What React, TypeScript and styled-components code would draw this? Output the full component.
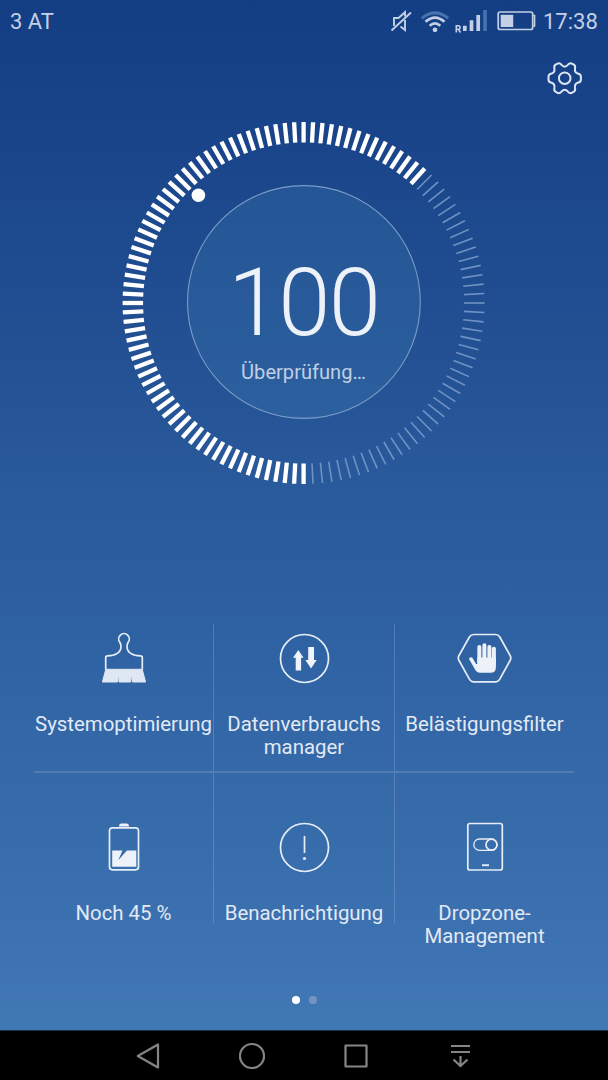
import React from "react";
import styled, { createGlobalStyle } from "styled-components";

const GlobalStyle = createGlobalStyle`
  body { margin: 0; background: #000; }
  * { box-sizing: border-box; }
`;

const Screen = styled.main`
  width: 608px;
  height: 1080px;
  display: flex;
  flex-direction: column;
  overflow: hidden;
  font-family: Roboto, sans-serif;
  color: #e2e9f4;
`;

const Content = styled.div`
  height: 1030px;
  display: flex;
  flex-direction: column;
  background: linear-gradient(
    180deg,
    #133e83 0px,
    #1a458a 150px,
    #225093 340px,
    #2a5b9c 500px,
    #2f62a3 640px,
    #376cab 830px,
    #3e73b3 960px,
    #4079b3 1030px
  );
`;

const StatusBar = styled.header`
  height: 41px;
  display: flex;
  align-items: center;
  justify-content: space-between;
  padding: 0 10px 0 10px;
  font-size: 22px;
  color: #c3d0e5;
`;

const Carrier = styled.span`
  padding-top: 2px;
`;

const StatusIcons = styled.div`
  display: flex;
  align-items: center;
`;

const Clock = styled.span`
  margin-left: 7px;
  padding-top: 2px;
  width: 55px;
  white-space: nowrap;
`;

const Toolbar = styled.div`
  height: 69px;
  display: flex;
  justify-content: flex-end;
  padding: 17px 23px 0 0;
`;

const Gauge = styled.section`
  width: 386px;
  height: 386px;
  align-self: center;
  display: grid;
  place-items: center;
  margin-right: 1px;
  > * { grid-area: 1 / 1; }
`;

const Reading = styled.div`
  display: flex;
  flex-direction: column;
  align-items: center;
  padding-top: 33px;
`;

const Score = styled.div`
  font-size: 94px;
  line-height: 94px;
  font-weight: 300;
  letter-spacing: -1.800px;
  color: #edf1f8;
`;

const State = styled.div`
  margin-top: 10px;
  font-size: 20.100px;
  line-height: 24px;
  color: #c0cee5;
`;

const Tiles = styled.section`
  width: 540px;
  margin: 128px 0 0 34px;
  display: grid;
  grid-template-columns: 180px 181px 179px;
  grid-template-rows: 149px 151px;
`;

const Tile = styled.div<{ $row: number; $last: boolean }>`
  display: flex;
  flex-direction: column;
  align-items: center;
  padding-top: ${(p) => (p.$row === 0 ? 4 : 44)}px;
  border: 0 solid rgba(190, 195, 225, 0.2);
  border-right-width: ${(p) => (p.$last ? 0 : 1)}px;
  border-right-color: rgba(190, 195, 225, 0.26);
  border-bottom-width: ${(p) => (p.$row === 0 ? 2 : 0)}px;
`;

const TileLabel = styled.div`
  margin-top: 25px;
  flex: none;
  font-size: 20.400px;
  line-height: 23px;
  text-align: center;
  white-space: pre;
`;

const Pager = styled.div`
  margin-top: 72px;
  display: flex;
  justify-content: center;
  gap: 9px;
`;

const Dot = styled.i<{ $active?: boolean }>`
  width: 8px;
  height: 8px;
  border-radius: 50%;
  background: ${(p) => (p.$active ? "#fff" : "#7594c4")};
`;

const NavBar = styled.nav`
  height: 50px;
  flex: none;
  display: flex;
  align-items: center;
  justify-content: center;
  gap: 64px;
  background: #000;
  border-top: 1px solid #16304c;
`;

const Icon = styled.svg<{ $ml?: number }>`
  display: block;
  flex: none;
  fill: none;
  margin-left: ${(p) => p.$ml ?? 0}px;
`;

const TICKS = Array.from({ length: 120 }, (_, i) => i * 3);

const Dial = () => (
  <Icon width="386" height="386" viewBox="-192.6 -193 386 386">
    <circle cx="0.3" cy="-1" r="116.4" fill="rgba(64,128,180,0.25)" stroke="#7b9cc9" strokeWidth="1.1" />
    {TICKS.map((a) => {
      const lit = a >= 180 || a <= 42;
      return (
        <line
          key={a}
          y1="-181"
          y2="-160.5"
          transform={`rotate(${a})`}
          stroke={lit ? "#fff" : "#6f92c4"}
          strokeWidth={lit ? 4.3 : 1.6}
        />
      );
    })}
    <circle cx="-105.2" cy="-107.800" r="6.8" fill="#fff" />
  </Icon>
);

const STROKE = "#e6edf7";

const tiles = [
  {
    label: "Systemoptimierung",
    art: (
      <g stroke={STROKE} strokeWidth="1.7" strokeLinejoin="round">
        <path d="M11.700 41.500V29.600q0-1.700 1.800-1.700c8 0 13.500-3.500 13.500-9.500 0-2-.6-3-1.200-4.200a5.300 5.300 0 1 1 8.400 0c-.6 1.200-1.200 2.200-1.200 4.200 0 6 5.500 9.500 13.500 9.500q1.800 0 1.800 1.700V41.500" />
        <path d="M11.800 41.300h36.400l3.400 12.700H38.400l-1.200-8.500-.6 8.500H25l-.3-8.500-1.300 8.500H8.400z" fill="#dfe7f3" stroke="#dfe7f3" strokeWidth="1" />
      </g>
    ),
  },
  {
    label: "Datenverbrauchs\nmanager",
    art: (
      <g>
        <circle cx="30.5" cy="30.5" r="24" stroke={STROKE} strokeWidth="1.7" />
        <path d="M24.300 22l5.200 7.700h-2.400v12.800h-5.400V29.700H19z" fill="#eff3fa" />
        <path d="M37 40.500l5.700-8.500h-2.700V19h-5.800v13h-2.800z" fill="#eff3fa" />
      </g>
    ),
  },
  {
    label: "Belästigungsfilter",
    art: (
      <g>
        <path d="M19.500 6.500h21.800q2.800 0 4.300 2.500l10.300 18.500q1.400 2.500 0 5L45.600 51.200q-1.500 2.700-4.300 2.700H19.500q-2.800 0-4.300-2.700L4.800 32.500q-1.400-2.500 0-5L15.200 9q1.500-2.500 4.300-2.500z" transform="translate(-.8 0)" stroke={STROKE} strokeWidth="1.7" />
        <path d="M14.600 31.600l6.200 10.700q1.600 2.500 4.400 2.500h10.500q5.500 0 5.500-5.500V29.500H22.600v6.500l-1.200 0-3.300-5.600q-.9-1.500-2.600-.9-1.700.7-.9 2.100z" transform="translate(-.3 0)" fill="#edf2f9" />
        <g stroke="#edf2f9" strokeWidth="4" strokeLinecap="round" transform="translate(-.3 0)">
          <path d="M24.650 19V34M29.700 17.200V34M34.700 19V34M39.200 20.700V36" />
        </g>
      </g>
    ),
  },
  {
    label: "Noch 45 %",
    art: (
      <g transform="translate(-.5 0)">
        <rect x="16" y="10.800" width="29" height="42" rx="3" stroke={STROKE} strokeWidth="1.7" />
        <path d="M25.500 9.500q0-3 2.500-3h5q2.500 0 2.500 3z" fill="#edf2f9" />
        <path d="M18.700 33.500h10.300l-4.300 9.700 8.800-9.700h9.300v16.300H18.700z" fill="#edf2f9" />
      </g>
    ),
  },
  {
    label: "Benachrichtigung",
    art: (
      <g>
        <circle cx="30.500" cy="30.500" r="24" stroke={STROKE} strokeWidth="1.700" />
        <path d="M30.500 19v17" stroke={STROKE} strokeWidth="1.700" />
        <circle cx="30.500" cy="41.500" r="1.600" fill={STROKE} />
      </g>
    ),
  },
  {
    label: "Dropzone-\nManagement",
    art: (
      <g stroke={STROKE} strokeWidth="1.700">
        <rect x="12.800" y="6.500" width="34.500" height="46.500" rx="2" />
        <rect x="18.800" y="22" width="23.200" height="11.300" rx="5.650" strokeWidth="1.300" />
        <circle cx="36.500" cy="27.700" r="5.500" />
        <path d="M27 48.200h7" strokeWidth="1.900" />
      </g>
    ),
  },
];

export default function App() {
  return (
    <Screen>
      <GlobalStyle />
      <Content>
        <StatusBar>
          <Carrier>3 AT</Carrier>
          <StatusIcons>
            <Icon width="22" height="24" viewBox="0 0 22 24" stroke="#c3d0e5" strokeWidth="1.900">
              <path d="M1.500 21.500L21 3.500" />
              <path d="M4 17V9h4.500L15 3.200v4.300M10.500 17.500L15 21V11" />
            </Icon>
            <Icon $ml={8} width="30" height="24" viewBox="0 0 30 24" strokeWidth="2.600">
              <path d="M1.800 9.400q13.200-11 26.400 0" stroke="#4473ae" strokeWidth="3" />
              <path d="M5.500 12.800q9.500-8.500 19 0M9.700 16.700q5.300-4.700 10.600 0" stroke="#c3d0e5" />
              <circle cx="15" cy="20.800" r="2.400" fill="#c3d0e5" />
            </Icon>
            <Icon $ml={5} width="33" height="26" viewBox="0 0 33 26">
              <path d="M1.300 24.500v-6.800h2.200q1.600 0 1.600 1.800T3.500 21.200H1.300M3.300 21.200l2.200 3.300" stroke="#c3d0e5" strokeWidth="1.600" />
              <path d="M9.800 23v-5.300M16.500 23V12.300M23.200 23V7" stroke="#c3d0e5" strokeWidth="3.700" />
              <path d="M30 23V2" stroke="#4473ae" strokeWidth="3.700" />
            </Icon>
            <Icon $ml={9} width="39" height="20" viewBox="0 0 39 20">
              <rect x="1.200" y="1" width="34.500" height="17.500" rx="2" stroke="#c3d0e5" strokeWidth="1.700" />
              <rect x="3.700" y="3.800" width="12.500" height="12.200" fill="#c3d0e5" />
              <path d="M36.200 4.500H37.600V15h-1.400" stroke="#c3d0e5" strokeWidth="1.500" />
            </Icon>
            <Clock>17:38</Clock>
          </StatusIcons>
        </StatusBar>
        <Toolbar>
          <Icon width="40" height="40" viewBox="-20 -20 40 40" stroke="#dbe5f3" strokeWidth="2" strokeLinejoin="round">
            <circle cx="-.3" cy=".2" r="5.800" />
            <path transform="translate(-.3 .2)" d="M0-11.500Q2-11.700 3.500-13.700 5.200-15.800 7.600-14.400L9.200-13.500Q11-12.300 10.300-9.500 9.700-5.800 13-4.600 16.200-4 16.200-1.500V1.500Q16.200 4 13 4.600 9.700 5.800 10.300 9.500 11 12.300 9.200 13.500L7.600 14.400Q5.200 15.800 3.500 13.700 2 11.700 0 11.500-2 11.700-3.500 13.700-5.200 15.800-7.600 14.400L-9.200 13.500Q-11 12.300-10.300 9.500-9.700 5.800-13 4.600-16.200 4-16.200 1.500V-1.500Q-16.200-4-13-4.600-9.700-5.800-10.300-9.500-11-12.300-9.200-13.500L-7.600-14.400Q-5.200-15.800-3.500-13.700-2-11.700 0-11.500Z" />
          </Icon>
        </Toolbar>
        <Gauge>
          <Dial />
          <Reading>
            <Score>100</Score>
            <State>Überprüfung…</State>
          </Reading>
        </Gauge>
        <Tiles>
          {tiles.map((t, i) => (
            <Tile key={t.label} $row={Math.floor(i / 3)} $last={i % 3 === 2}>
              <Icon width="60" height="60" viewBox="0 0 60 60">{t.art}</Icon>
              <TileLabel>{t.label}</TileLabel>
            </Tile>
          ))}
        </Tiles>
        <Pager>
          <Dot $active />
          <Dot />
        </Pager>
      </Content>
      <NavBar>
        <Icon width="40" height="40" viewBox="0 0 40 40" stroke="#858585" strokeWidth="2.200" strokeLinejoin="round">
          <path d="M30 8.500v23L9.800 20z" />
        </Icon>
        <Icon width="40" height="40" viewBox="0 0 40 40" stroke="#858585" strokeWidth="2.200">
          <circle cx="20" cy="20" r="12" />
        </Icon>
        <Icon width="40" height="40" viewBox="0 0 40 40" stroke="#858585" strokeWidth="2.200" strokeLinejoin="round">
          <rect x="9.500" y="9.500" width="21" height="21" />
        </Icon>
        <Icon width="40" height="40" viewBox="0 0 40 40" stroke="#858585" strokeWidth="2.200">
          <path d="M11 10h19M11 16h19M20.500 20v10M13.500 23.500l7 6.500 7-6.500" />
        </Icon>
      </NavBar>
    </Screen>
  );
}
